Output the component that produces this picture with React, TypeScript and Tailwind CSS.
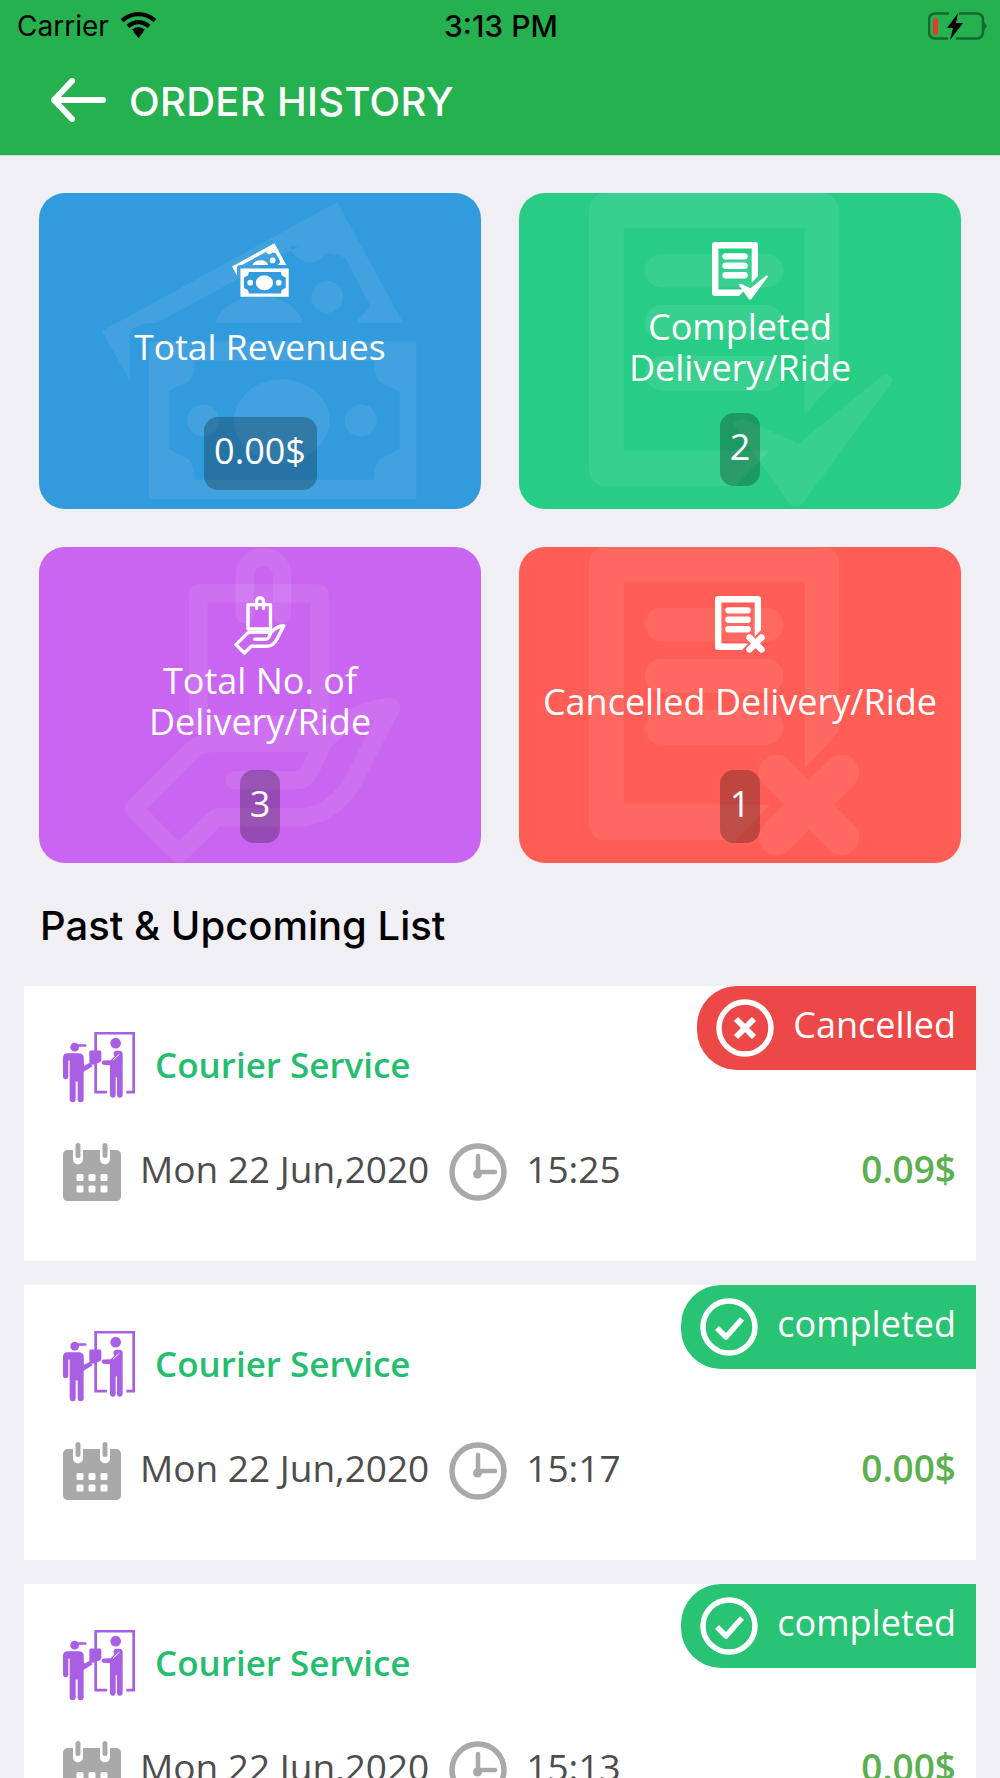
import React from 'react'

const sans = "font-['Open_Sans',sans-serif]"

function MoneyIcon({ className }: { className?: string }) {
  return (
    <svg viewBox="0 0 57.5 55" className={className} fill="currentColor" fillRule="evenodd">
      <path d="M0 23.5L42.8 0l12 22h-8.400c.6-1.800 2.600-2 2.200-3.600L44.300 10.200c-1.200-.6-2.600-.9-3.600-.9-1.600 2.600-5.200 2.200-6.600-1.200L36 7.900 10 22c-2.400 0-4.800.6-5 2.400v8.100z" />
      <path d="M20.700 22c.8-2.800 4-4.800 8-4.800s7.100 2 7.900 4.800z" />
      <circle cx="41" cy="17.300" r="2.900" />
      <path d="M8.500 25.400h48.700v28.700H8.500zM16.900 28.900c-.4 3.600-.4 3.600-3.500 4.800l-1.300.9v10.300l1.300.9c3.100 1.200 3.100 1.200 3.500 4.800h32.600c.4-3.600.4-3.600 3-4.800l1.700-.9V34.600l-1.700-.9c-2.600-1.200-2.600-1.200-3-4.800z" />
      <ellipse cx="32.700" cy="39.800" rx="8.700" ry="7.500" />
      <circle cx="18.400" cy="39.800" r="2.900" />
      <circle cx="47.100" cy="39.800" r="2.900" />
    </svg>
  )
}

function DocBase() {
  return (
    <>
      <path d="M3 0h40a3 3 0 0 1 3 3v31l-6.300 6.800V6.400H6.400v41h27L27 54H3a3 3 0 0 1-3-3V3a3 3 0 0 1 3-3z" />
      <rect x="10.300" y="11.200" width="25.500" height="6.200" rx="3.100" />
      <rect x="10.300" y="20.600" width="25.500" height="6.300" rx="3.100" />
      <rect x="10.300" y="30" width="25.500" height="6.400" rx="3.200" />
    </>
  )
}

function DocCheckIcon({ className }: { className?: string }) {
  return (
    <svg viewBox="0 0 56 58" className={className} fill="currentColor">
      <DocBase />
      <path d="M26.500 42.500c1-1 2-1 3-.5l9 4.200L54 33.700c1-.8 2.400.3 1.700 1.300L39.500 57c-.8 1-2 1-2.800 0z" />
    </svg>
  )
}

function DocCrossIcon({ className }: { className?: string }) {
  return (
    <svg viewBox="0 0 51 58" className={className} fill="currentColor">
      <DocBase />
      <path d="M34.500 41.500l12 12M46.500 41.500l-12 12" stroke="currentColor" strokeWidth="6.500" strokeLinecap="round" />
    </svg>
  )
}

function HandBagIcon({ className }: { className?: string }) {
  return (
    <svg viewBox="0 0 52 59" className={className} fill="none" stroke="currentColor" strokeWidth="3.400" strokeLinecap="round" strokeLinejoin="round">
      <path d="M14 8.600h22.500v24.400H14z" />
      <path d="M22.600 12.500V5.200a3.450 3.450 0 0 1 6.900 0v7.300" />
      <path d="M37 36.400c3-3.400 7-6.400 12.800-6.700L43 43c-2 4-6 7.200-10.400 7.200H17.300L10.400 57 2 48.600l11.200-11.200c.8-.6 1.800-1 3.200-1H37l-2 4.600c-.8 1.500-1.500 2.300-3 2.300H20.800" />
    </svg>
  )
}

function CourierIcon({ className }: { className?: string }) {
  return (
    <svg viewBox="130 187 216 212" className={className} fill="#a85fe3">
      <path d="M262 367H228V190H342V367H320" fill="none" stroke="#a85fe3" strokeWidth="8" />
      <circle cx="165" cy="232" r="13" />
      <path d="M172 223h24c6 0 6 8 0 8h-24z" />
      <path d="M143 250H178c8 0 12 4 14 10l1 28 19-10 6 12-26 16V388a9 9 0 0 1-18 0V335h-6V388a9 9 0 0 1-18 0V272h-4V320a8 8 0 0 1-16 0V264c0-8 5-14 13-14z" />
      <path d="M213 242h26c4 0 6 2 6 6v22c0 4-2 6-6 8l-16 6c-8 2-14-2-14-10v-26c0-4 1-6 4-6z" />
      <circle cx="288" cy="220" r="16" />
      <path d="M280 243H300c6 0 9 4 9 10V375a8.500 8.500 0 0 1-17 0V322h-4V375a8.500 8.500 0 0 1-17 0V286l-19-1c-8-1-8-12 0-13l21-1 12-12c-6-4-4-16 5-16z" />
      <path d="M280 271l19-18" stroke="#fff" strokeWidth="3" fill="none" />
    </svg>
  )
}

function CalendarIcon() {
  return (
    <svg viewBox="0 0 58 58" className="w-[58px] h-[58px] shrink-0" fill="#a9a9a9">
      <path fillRule="evenodd" d="M5 7h5v9c0 7 10 7 10 0V7h17v9c0 7 10 7 10 0V7h6c3 0 5 2 5 5v41c0 3-2 5-5 5H5c-3 0-5-2-5-5V12c0-3 2-5 5-5zM15 31a1.500 1.500 0 0 0-1.500 1.500v4a1.500 1.500 0 0 0 1.500 1.500h4a1.500 1.500 0 0 0 1.500-1.500v-4A1.500 1.500 0 0 0 19 31zm12 0a1.500 1.500 0 0 0-1.500 1.500v4A1.500 1.500 0 0 0 27 38h4a1.500 1.500 0 0 0 1.500-1.500v-4A1.500 1.500 0 0 0 31 31zm12 0a1.500 1.500 0 0 0-1.500 1.500v4A1.500 1.500 0 0 0 39 38h4a1.500 1.500 0 0 0 1.500-1.500v-4A1.500 1.500 0 0 0 43 31zM15 42.500a1.500 1.500 0 0 0-1.500 1.500v4a1.500 1.500 0 0 0 1.500 1.500h4a1.500 1.500 0 0 0 1.500-1.500v-4a1.500 1.500 0 0 0-1.500-1.500zm12 0a1.500 1.500 0 0 0-1.500 1.500v4a1.500 1.500 0 0 0 1.500 1.500h4a1.500 1.500 0 0 0 1.500-1.500v-4a1.500 1.500 0 0 0-1.500-1.500zm12 0a1.500 1.500 0 0 0-1.500 1.500v4a1.500 1.500 0 0 0 1.500 1.500h4a1.500 1.500 0 0 0 1.500-1.500v-4a1.500 1.500 0 0 0-1.500-1.500z" />
      <rect x="12.500" y="0" width="5" height="15" rx="2.500" />
      <rect x="39.500" y="0" width="5" height="15" rx="2.500" />
    </svg>
  )
}

function ClockIcon() {
  return (
    <svg viewBox="0 0 58 58" className="w-[58px] h-[58px] shrink-0" fill="none" stroke="#a9a9a9">
      <circle cx="29" cy="29" r="26" strokeWidth="5.500" />
      <path d="M29 13v16h17" strokeWidth="4.500" strokeLinecap="round" />
      <circle cx="28.500" cy="31" r="4.500" fill="#a9a9a9" stroke="none" />
    </svg>
  )
}

function Pill({ children, className }: { children: React.ReactNode; className: string }) {
  return (
    <div className={`h-[73px] rounded-[14px] bg-black/25 flex items-center justify-center pb-[6px] text-[36px] text-white ${className}`}>
      {children}
    </div>
  )
}

function StatusBadge({ status }: { status: 'Cancelled' | 'completed' }) {
  const cancelled = status === 'Cancelled'
  return (
    <div
      className={`absolute top-0 right-0 h-[84px] rounded-l-[40px] flex items-center text-white text-[36px] pl-[19px] pr-[20px] gap-[19px] ${
        cancelled ? 'bg-[#ec4848]' : 'bg-[#29c374]'
      }`}
    >
      <svg viewBox="0 0 58 58" className="w-[58px] h-[58px] shrink-0" fill="none" stroke="#fff">
        <circle cx="29" cy="29" r="26" strokeWidth="5.500" />
        {cancelled ? (
          <path d="M20 20l18 18M38 20L20 38" strokeWidth="6" />
        ) : (
          <path d="M17 30l9 9 16-18" strokeWidth="5.500" strokeLinejoin="round" />
        )}
      </svg>
      <span className="leading-none -mt-[6px]">{status}</span>
    </div>
  )
}

function OrderCard({ status, time, price }: { status: 'Cancelled' | 'completed'; time: string; price: string }) {
  return (
    <div className="relative bg-white h-[275px] shrink-0 pt-[46px] pl-[39px] pr-[20px]">
      <StatusBadge status={status} />
      <div className="flex items-center gap-[20px] h-[71px]">
        <CourierIcon className="w-[72px] h-[71px] shrink-0" />
        <span className="text-[35px] font-semibold text-[#25be6f] -mt-[4px]">Courier Service</span>
      </div>
      <div className="flex items-center mt-[40px] h-[58px]">
        <CalendarIcon />
        <span className="text-[37px] text-[#4d4d4d] ml-[19px] mr-[20px] -mt-[6px]">Mon 22 Jun,2020</span>
        <ClockIcon />
        <span className="text-[37px] text-[#4d4d4d] ml-[19px] -mt-[6px]">{time}</span>
        <span className="ml-auto text-[37px] font-semibold text-[#5bb04f] -mt-[6px]">{price}</span>
      </div>
    </div>
  )
}

export default function App() {
  return (
    <div className={`w-[1000px] h-[1778px] overflow-hidden bg-[#efeff4] ${sans}`}>
      {/* status bar + title */}
      <div className="h-[156px] bg-[#25b150] border-b border-[#d4d9d6] font-['Inter',sans-serif]">
        <div className="h-[52px] relative flex items-center pl-[17px] pr-[13px] text-[28px] text-black">
          <span>Carrier</span>
          <svg viewBox="0 0 38 28" className="w-[37px] h-[27px] ml-[11px] -mt-[3px]" fill="none" stroke="#000" strokeWidth="4.500">
            <path d="M2 10c10-9 24-9 34 0M8 16c7-6 15-6 22 0M14 21c3-3 7-3 10 0" />
            <path d="M19 28l-5-6c3-2 7-2 10 0z" fill="#000" stroke="none" />
          </svg>
          <span className="absolute left-[444px] text-[30px] font-medium">3:13 PM</span>
          <svg viewBox="0 0 59 28" className="ml-auto w-[59px] h-[28px]" fill="none">
            <path d="M21 1.500H7a6 6 0 0 0-6 6v13a6 6 0 0 0 6 6h13M31 1.500h18a6 6 0 0 1 6 6v13a6 6 0 0 1-6 6H28" stroke="#14692f" strokeWidth="2.500" />
            <rect x="5" y="6" width="5" height="17" rx="2" fill="#e5392c" />
            <path d="M30 1L19 16h6l-3 12 13-17h-7z" fill="#000" />
            <path d="M56 10l3 4-3 4z" fill="#14692f" />
          </svg>
        </div>
        <div className="flex items-center pl-[50px] mt-[25px] h-[50px]">
          <svg viewBox="0 0 56 44" className="w-[56px] h-[44px] -mt-[4px]" fill="none" stroke="#fff" strokeWidth="6" strokeLinecap="round" strokeLinejoin="round">
            <path d="M53 22H4M22 3L4 22l18 19" />
          </svg>
          <span className="ml-[23px] text-[40px] tracking-[0.3px] font-medium text-white">ORDER HISTORY</span>
        </div>
      </div>

      {/* summary cards */}
      <div className="grid grid-cols-[442px_442px] gap-x-[38px] gap-y-[38px] pl-[39px] pt-[37px]">
        <div className="relative h-[316px] rounded-[26px] overflow-hidden bg-[#329bdd] flex flex-col items-center pt-[50px] text-white">
          <MoneyIcon className="absolute left-[63px] top-[9px] w-[316px] h-[302px] text-white/[0.08]" />
          <MoneyIcon className="relative w-[57px] h-[55px] text-white" />
          <div className="relative mt-[28px] h-[41px] text-[35.500px] leading-[41px] text-center whitespace-nowrap">Total Revenues</div>
          <Pill className="relative mt-[50px] w-[113px]">0.00$</Pill>
        </div>

        <div className="relative h-[316px] rounded-[26px] overflow-hidden bg-[#27cc85] flex flex-col items-center pt-[49px] text-white">
          <DocCheckIcon className="absolute left-[70px] top-0 w-[304px] h-[315px] text-white/[0.08]" />
          <DocCheckIcon className="relative w-[56px] h-[58px] text-white" />
          <div className="relative mt-[6px] text-[36px] leading-[41px] text-center whitespace-nowrap">
            Completed
            <br />
            Delivery/Ride
          </div>
          <Pill className="relative mt-[25px] w-[40px]">2</Pill>
        </div>

        <div className="relative h-[316px] rounded-[26px] overflow-hidden bg-[#c965f0] flex flex-col items-center pt-[49px] text-white">
          <HandBagIcon className="absolute left-[84px] top-0 w-[280px] h-[318px] text-white/[0.08]" />
          <HandBagIcon className="relative w-[52px] h-[59px] text-white" />
          <div className="relative mt-[5px] text-[36px] leading-[41px] text-center whitespace-nowrap">
            Total No. of
            <br />
            Delivery/Ride
          </div>
          <Pill className="relative mt-[28px] w-[40px]">3</Pill>
        </div>

        <div className="relative h-[316px] rounded-[26px] overflow-hidden bg-[#ff5d55] flex flex-col items-center pt-[49px] text-white">
          <DocCrossIcon className="absolute left-[70px] top-0 w-[277px] h-[315px] text-white/[0.08]" />
          <DocCrossIcon className="relative w-[51px] h-[58px] text-white" />
          <div className="relative mt-[27px] text-[36px] leading-[41px] text-center whitespace-nowrap">Cancelled Delivery/Ride</div>
          <Pill className="relative mt-[48px] w-[40px]">1</Pill>
        </div>
      </div>

      <h2 className="font-['Inter',sans-serif] font-medium text-[40px] leading-[44px] text-black pl-[40px] mt-[41px]">
        Past &amp; Upcoming List
      </h2>

      {/* order list */}
      <div className="flex flex-col gap-[24px] mx-[24px] mt-[38px]">
        <OrderCard status="Cancelled" time="15:25" price="0.09$" />
        <OrderCard status="completed" time="15:17" price="0.00$" />
        <OrderCard status="completed" time="15:13" price="0.00$" />
      </div>
    </div>
  )
}
